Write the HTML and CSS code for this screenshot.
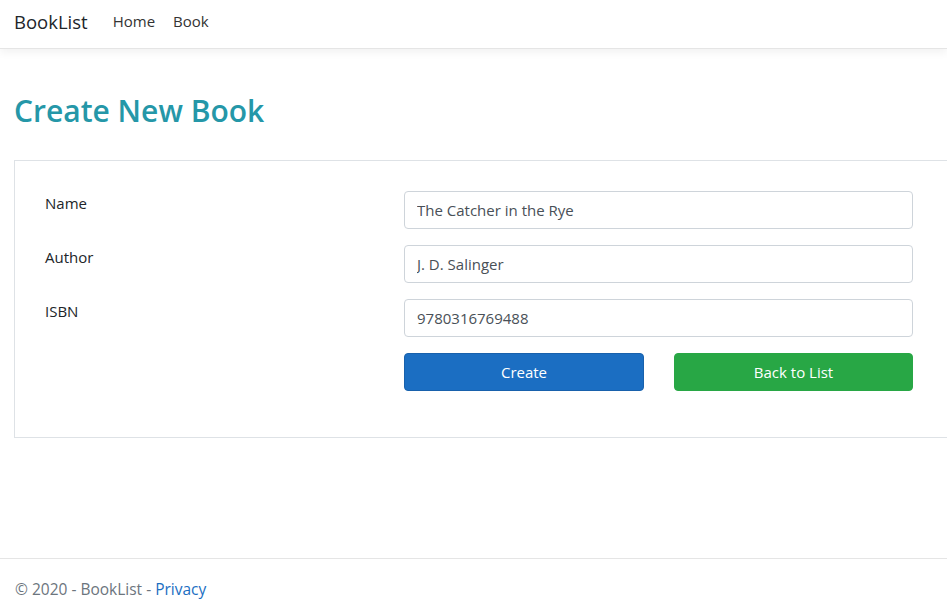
FILE: index.html
```html
<!DOCTYPE html>
<html lang="en">
<head>
<meta charset="utf-8">
<title>Create - BookList</title>
<link rel="stylesheet" href="styles.css">
</head>
<body>
<header class="navbar">
  <a class="brand" href="#">BookList</a>
  <nav class="nav">
    <a href="#">Home</a>
    <a href="#">Book</a>
  </nav>
</header>
<main class="main">
  <h2 class="title">Create New Book</h2>
  <form class="card">
    <div class="row">
      <label class="label">Name</label>
      <input class="input" type="text" value="The Catcher in the Rye">
    </div>
    <div class="row">
      <label class="label">Author</label>
      <input class="input" type="text" value="J. D. Salinger">
    </div>
    <div class="row">
      <label class="label">ISBN</label>
      <input class="input" type="text" value="9780316769488">
    </div>
    <div class="row">
      <span></span>
      <div class="buttons">
        <button type="button" class="btn btn-primary">Create</button>
        <a class="btn btn-success" href="#">Back to List</a>
      </div>
    </div>
  </form>
</main>
<footer class="footer">
  &copy; 2020 - BookList - <a href="#">Privacy</a>
</footer>
</body>
</html>
```

FILE: styles.css
```css
html, body {
  margin: 0;
  padding: 0;
  height: 100%;
}
body {
  font-family: "Open Sans", "Noto Sans", sans-serif;
  font-size: 15px;
  color: #212529;
  background: #fff;
  overflow: hidden;
  position: relative;
}
a { text-decoration: none; }

.navbar {
  box-sizing: border-box;
  display: flex;
  align-items: center;
  height: 49px;
  padding: 0 14px 6px;
  border-bottom: 1px solid #e5e5e5;
  box-shadow: 0 4px 8px rgba(0,0,0,0.05);
}
.brand {
  font-size: 18.5px;
  color: #212529;
  margin-right: 25px;
}
.nav {
  display: flex;
  gap: 18px;
}
.nav a {
  color: #333;
  font-size: 15px;
}

.main {
  padding: 0 0 0 14px;
}
.title {
  margin: 43px 0 30px;
  font-size: 30px;
  font-weight: 600;
  line-height: 1.25;
  color: #2597a8;
}
.card {
  margin-right: -20px;
  border: 1px solid #dee2e6;
  padding: 30px 0 46px 30px;
  display: flex;
  flex-direction: column;
  gap: 16px;
}
.row {
  display: grid;
  grid-template-columns: 359px 509px;
  align-items: start;
}
.label {
  line-height: 24px;
  font-size: 15px;
}
.input {
  box-sizing: border-box;
  height: 38px;
  width: 100%;
  padding: 6px 12px;
  border: 1px solid #ced4da;
  border-radius: 4px;
  font-family: inherit;
  font-size: 15px;
  color: #495057;
  background: #fff;
}
.buttons {
  display: grid;
  grid-template-columns: 240px 239px;
  gap: 30px;
}
.btn {
  box-sizing: border-box;
  height: 38px;
  display: flex;
  align-items: center;
  justify-content: center;
  border: 1px solid transparent;
  border-radius: 4px;
  color: #fff;
  font-family: inherit;
  font-size: 15px;
  cursor: pointer;
}
.btn-primary {
  background: #1b6ec2;
  border-color: #1861ac;
}
.btn-success {
  background: #28a745;
  border-color: #28a745;
}

.footer {
  position: absolute;
  left: 0;
  right: 0;
  bottom: 0;
  height: 47px;
  line-height: 60px;
  padding: 0 15px;
  border-top: 1px solid #e5e5e5;
  color: #6c757d;
  font-size: 15.5px;
  white-space: nowrap;
  overflow: hidden;
}
.footer a { color: #1b6ec2; }
```
